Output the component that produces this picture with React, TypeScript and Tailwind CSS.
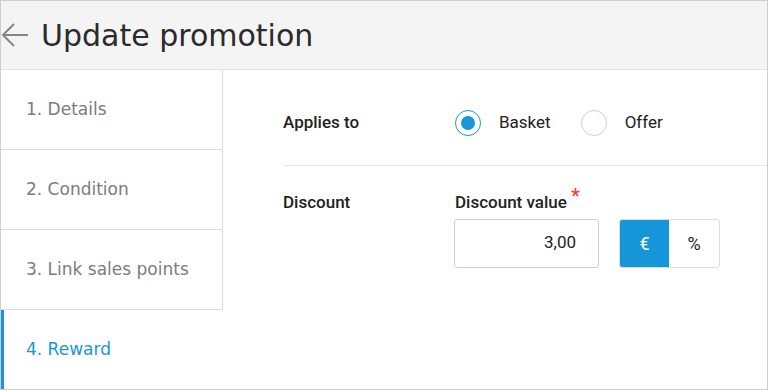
const steps = ["1. Details", "2. Condition", "3. Link sales points", "4. Reward"]

function Radio({ checked, label }: { checked: boolean; label: string }) {
  return (
    <div className="flex items-center">
      <div
        className={
          checked
            ? "w-[26px] h-[26px] rounded-full border border-[#1a96d8] flex items-center justify-center"
            : "w-[26px] h-[26px] rounded-full border border-[#cfcfcf]"
        }
      >
        {checked && <div className="w-[14px] h-[14px] rounded-full bg-[#1a96d8]" />}
      </div>
      <span className="ml-[18px] text-[17px] text-[#222]">{label}</span>
    </div>
  )
}

function App() {
  return (
    <div
      className="w-[768px] h-[390px] border border-[#cfcfcf] flex flex-col overflow-hidden bg-white"
      style={{ fontFamily: "Roboto, 'Liberation Sans', sans-serif" }}
    >
      <div className="h-[69px] bg-[#f4f4f4] border-b border-[#e2e2e2] flex items-center shrink-0">
        <svg width="28" height="28" viewBox="0 0 28 28" fill="none" stroke="#858585" strokeWidth="2">
          <path d="M2 14H27" />
          <path d="M13 3L2 14L13 25" />
        </svg>
        <h1
          className="ml-[12px] text-[30px] text-[#2b2b2b]"
          style={{ fontFamily: "'DejaVu Sans', sans-serif" }}
        >
          Update promotion
        </h1>
      </div>

      <div className="flex flex-1">
        {/* étapes */}
        <div className="w-[222px] flex flex-col shrink-0" style={{ fontFamily: "'DejaVu Sans', sans-serif" }}>
          {steps.map((s, i) =>
            i === 3 ? (
              <div key={s} className="h-[80px] border-l-[3px] border-[#1a96d8] flex items-center pl-[22px] text-[17px] text-[#1a96d8]">
                {s}
              </div>
            ) : (
              <div key={s} className="h-[80px] border-b border-r border-[#dcdcdc] flex items-center pl-[25px] text-[17px] text-[#7c7c7c]">
                {s}
              </div>
            )
          )}
        </div>

        <div className="flex-1 pl-[60px]">
          <div className="h-[96px] flex items-center border-b border-[#e6e6e6] pt-[10px]">
            <div className="w-[172px] text-[17px] font-medium text-[#222]">Applies to</div>
            <div className="flex items-center gap-[30px]">
              <Radio checked label="Basket" />
              <Radio checked={false} label="Offer" />
            </div>
          </div>

          <div className="flex pt-[24px]">
            <div className="w-[172px] text-[17px] font-medium text-[#222]">Discount</div>
            <div>
              <div className="text-[17px] font-medium text-[#222] flex">
                Discount value
                <span className="text-[#f0443c] text-[20px] ml-[4px] -mt-[9px]">*</span>
              </div>
              <div className="flex items-center mt-[3px] -ml-[1px]">
                <div className="w-[145px] h-[49px] border border-[#cfcfcf] rounded-[3px] flex items-center justify-end pr-[22px] text-[17px] text-[#222]">
                  3,00
                </div>
                <div className="ml-[20px] flex h-[49px] border border-[#dcdcdc] rounded-[3px] overflow-hidden">
                  <div className="w-[49px] bg-[#1596d8] text-white flex items-center justify-center text-[18px]">€</div>
                  <div className="w-[50px] flex items-center justify-center text-[18px] text-[#222]">%</div>
                </div>
              </div>
            </div>
          </div>
        </div>
      </div>
    </div>
  )
}

export default App
